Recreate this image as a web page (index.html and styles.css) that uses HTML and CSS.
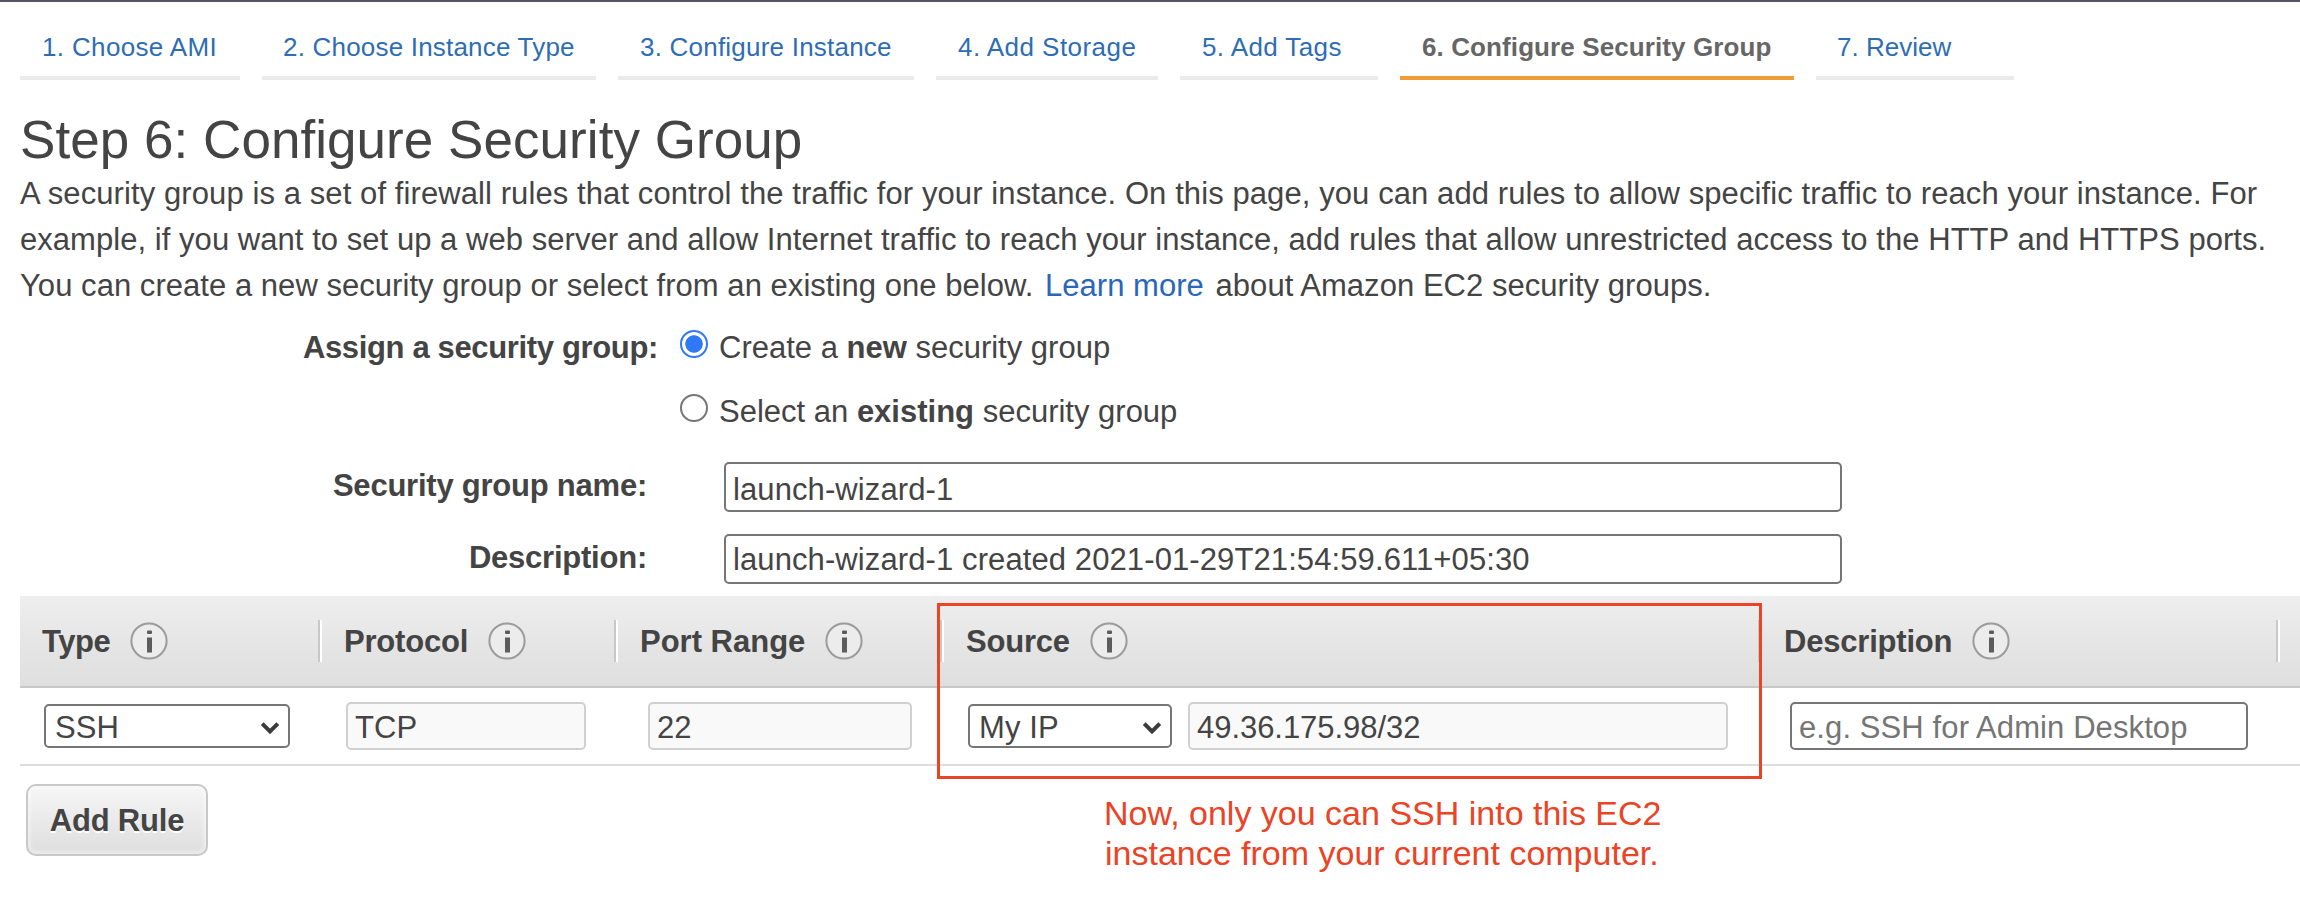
FILE: index.html
```html
<!DOCTYPE html>
<html lang="en">
<head>
<meta charset="utf-8">
<title>Configure Security Group</title>
<link rel="stylesheet" href="styles.css">
</head>
<body>
<svg class="defs" width="0" height="0">
  <symbol id="info" viewBox="0 0 38 38">
    <circle cx="19" cy="19" r="17.6" fill="#ececec" stroke="#9b9b9b" stroke-width="2"/>
    <rect x="17" y="8.5" width="5" height="3.6" rx="1" fill="#5c5c5c"/>
    <rect x="17" y="15.5" width="5" height="15" fill="#5c5c5c"/>
  </symbol>
  <symbol id="chevron" viewBox="0 0 20 14">
    <path d="M2.2 2.6 L10 10.4 L17.8 2.6" fill="none" stroke="#3c3c3c" stroke-width="4"/>
  </symbol>
</svg>
<nav class="tabs">
  <a class="tab tab-ami"><span>1. Choose AMI</span></a>
  <a class="tab tab-type"><span>2. Choose Instance Type</span></a>
  <a class="tab tab-instance"><span>3. Configure Instance</span></a>
  <a class="tab tab-storage"><span>4. Add Storage</span></a>
  <a class="tab tab-tags"><span>5. Add Tags</span></a>
  <a class="tab tab-group active"><span>6. Configure Security Group</span></a>
  <a class="tab tab-review"><span>7. Review</span></a>
</nav>
<main>
  <h1><span>Step 6: Configure Security Group</span></h1>
  <p class="intro">
    <span class="line l1">A security group is a set of firewall rules that control the traffic for your instance. On this page, you can add rules to allow specific traffic to reach your instance. For</span>
    <span class="line l2">example, if you want to set up a web server and allow Internet traffic to reach your instance, add rules that allow unrestricted access to the HTTP and HTTPS ports.</span>
    <span class="line l3">You can create a new security group or select from an existing one below. <a class="more">Learn more</a> about Amazon EC2 security groups.</span>
  </p>
  <form class="form">
    <div class="row assign">
      <span class="label">Assign a security group:</span>
      <span class="radio on"></span>
      <span class="choice">Create a <b>new</b> security group</span>
    </div>
    <div class="row existing">
      <span class="label"></span>
      <span class="radio"></span>
      <span class="choice">Select an <b>existing</b> security group</span>
    </div>
    <div class="row name">
      <span class="label">Security group name:</span>
      <span class="box field">launch-wizard-1</span>
    </div>
    <div class="row desc">
      <span class="label">Description:</span>
      <span class="box field">launch-wizard-1 created 2021-01-29T21:54:59.611+05:30</span>
    </div>
  </form>
  <section class="rules">
    <div class="grid head">
      <div class="th"><span>Type</span><svg class="info"><use href="#info"/></svg></div>
      <div class="th"><span>Protocol</span><svg class="info"><use href="#info"/></svg></div>
      <div class="th"><span>Port Range</span><svg class="info"><use href="#info"/></svg></div>
      <div class="th"><span>Source</span><svg class="info"><use href="#info"/></svg></div>
      <div class="th"><span>Description</span><svg class="info"><use href="#info"/></svg></div>
      <div class="th"></div>
    </div>
    <div class="grid body">
      <div class="td"><span class="box select type">SSH<svg class="chevron"><use href="#chevron"/></svg></span></div>
      <div class="td"><span class="box disabled protocol">TCP</span></div>
      <div class="td"><span class="box disabled port">22</span></div>
      <div class="td"><span class="box select source">My IP<svg class="chevron"><use href="#chevron"/></svg></span><span class="box disabled cidr">49.36.175.98/32</span></div>
      <div class="td"><span class="box hint">e.g. SSH for Admin Desktop</span></div>
    </div>
    <div class="highlight"></div>
  </section>
  <footer class="foot">
    <button class="add" type="button">Add Rule</button>
    <p class="note"><span class="n1">Now, only you can SSH into this EC2</span><span class="n2">instance from your current computer.</span></p>
  </footer>
</main>
</body>
</html>
```
FILE: styles.css
```css
* { box-sizing: border-box; }
body {
  margin: 0;
  width: 2300px;
  height: 904px;
  overflow: hidden;
  background: #fff;
  border-top: 2px solid #545560;
  font-family: "Liberation Sans", Arial, sans-serif;
  font-size: 31px;
  color: #444;
}
.defs { position: absolute; }
.tabs {
  display: flex;
  gap: 22px;
  height: 78px;
  padding-left: 20px;
  font-size: 26px;
  line-height: 30px;
  color: #2e6db4;
}
.tab {
  padding: 30px 0 0 22px;
  border-bottom: 4px solid #ebebeb;
  white-space: nowrap;
}
.tab-ami { width: 220px; letter-spacing: .35px; }
.tab-type { width: 334px; padding-left: 21px; letter-spacing: .2px; }
.tab-instance { width: 296px; letter-spacing: .22px; }
.tab-storage { width: 222px; letter-spacing: .45px; }
.tab-tags { width: 198px; letter-spacing: .4px; }
.tab-group { width: 394px; letter-spacing: .1px; }
.tab-review { width: 198px; padding-left: 21px; }
.tab.active { border-color: #ee9b38; color: #666; font-weight: bold; }
h1 {
  margin: 0;
  padding: 30px 0 0 20px;
  height: 91px;
  font-size: 53px;
  font-weight: normal;
  line-height: 60px;
  letter-spacing: .05px;
  white-space: nowrap;
}
.intro { margin: 0; padding: 0 0 0 20px; height: 137px; line-height: 46px; }
.line { display: block; white-space: nowrap; letter-spacing: .09px; }
.l2 { letter-spacing: .045px; }
.l3 { letter-spacing: .04px; }
.more { color: #2a66ba; margin: 0 3px; }
.row { display: flex; white-space: nowrap; line-height: 36px; }
.label { font-weight: bold; text-align: right; letter-spacing: -.35px; }
.assign, .existing { height: 64px; padding-top: 22px; }
.assign .label, .existing .label { width: 658px; flex: none; margin-right: 22px; }
.radio {
  width: 28px;
  height: 28px;
  margin-right: 11px;
  border: 2px solid #767676;
  border-radius: 50%;
}
.radio.on { border-color: #2f78f6; background: radial-gradient(circle, #2f78f6 8.3px, #fff 9.1px); }
.name { padding-top: 26px; height: 98px; }
.desc { height: 62px; }
.name .label, .desc .label { width: 647px; flex: none; margin-right: 77px; padding-top: 6px; letter-spacing: -.23px; }
.box {
  display: block;
  flex: none;
  border: 2px solid #767676;
  border-radius: 5px;
  background: #fff;
  white-space: nowrap;
  letter-spacing: .1px;
}
.field { width: 1118px; height: 50px; padding: 8px 0 0 7px; }
.desc .field { padding-top: 6px; }
.rules { position: relative; margin-left: 20px; height: 170px; }
.grid { display: grid; grid-template-columns: 302px 296px 326px 818px 518px 20px; }
.head {
  height: 92px;
  padding-top: 24px;
  background: linear-gradient(#eee, #dedede);
  border-bottom: 2px solid #c8c8c8;
}
.th {
  display: flex;
  height: 42px;
  padding-left: 22px;
  border-right: 2px solid #fff;
  box-shadow: inset -2px 0 #c8c8c8;
  font-weight: bold;
  line-height: 44px;
  letter-spacing: -.2px;
  white-space: nowrap;
}
.th:nth-child(1) { letter-spacing: -.4px; }
.th:nth-child(3) { letter-spacing: 0; }
.th:last-child { border: 0; box-shadow: none; }
.info { width: 38px; height: 38px; margin: 2px 0 0 20px; }
.body { height: 78px; border-bottom: 2px solid #ddd; }
.td { display: flex; padding: 14px 0 0 24px; line-height: 36px; }
.td:nth-child(3) { padding-left: 30px; }
.td:nth-child(5) { padding-left: 28px; }
.disabled, .hint { height: 48px; padding: 6px 0 0 7px; }
.disabled { background: #f9f9f9; border-color: #d0d0d0; }
.hint { width: 458px; color: #757575; }
.select {
  display: flex;
  justify-content: space-between;
  height: 44px;
  margin-top: 2px;
  padding: 4px 8px 0 9px;
}
.chevron { width: 20px; height: 14px; margin-top: 11px; }
.type { width: 246px; }
.protocol { width: 240px; }
.port { width: 264px; }
.source { width: 204px; margin-right: 16px; }
.cidr { width: 540px; letter-spacing: -.05px; }
.highlight {
  position: absolute;
  left: 917px;
  top: 7px;
  width: 825px;
  height: 176px;
  border: 3px solid #eb4325;
}
.foot { display: flex; padding: 18px 0 0 26px; }
.add {
  width: 182px;
  height: 72px;
  padding: 2px 0 0;
  border: 2px solid #c8c8c8;
  border-radius: 10px;
  background: linear-gradient(#f6f6f6, #dedede);
  box-shadow: inset 0 0 4px 2px rgba(255, 255, 255, .5);
  font: bold 31px "Liberation Sans", Arial, sans-serif;
  letter-spacing: -.2px;
  color: #444;
  text-shadow: 0 2px #fff;
  white-space: nowrap;
}
.note { margin: 9px 0 0 896px; font-size: 34px; line-height: 40px; color: #eb4325; white-space: nowrap; }
.note span { display: block; }
.n2 { padding-left: 1px; }
```
